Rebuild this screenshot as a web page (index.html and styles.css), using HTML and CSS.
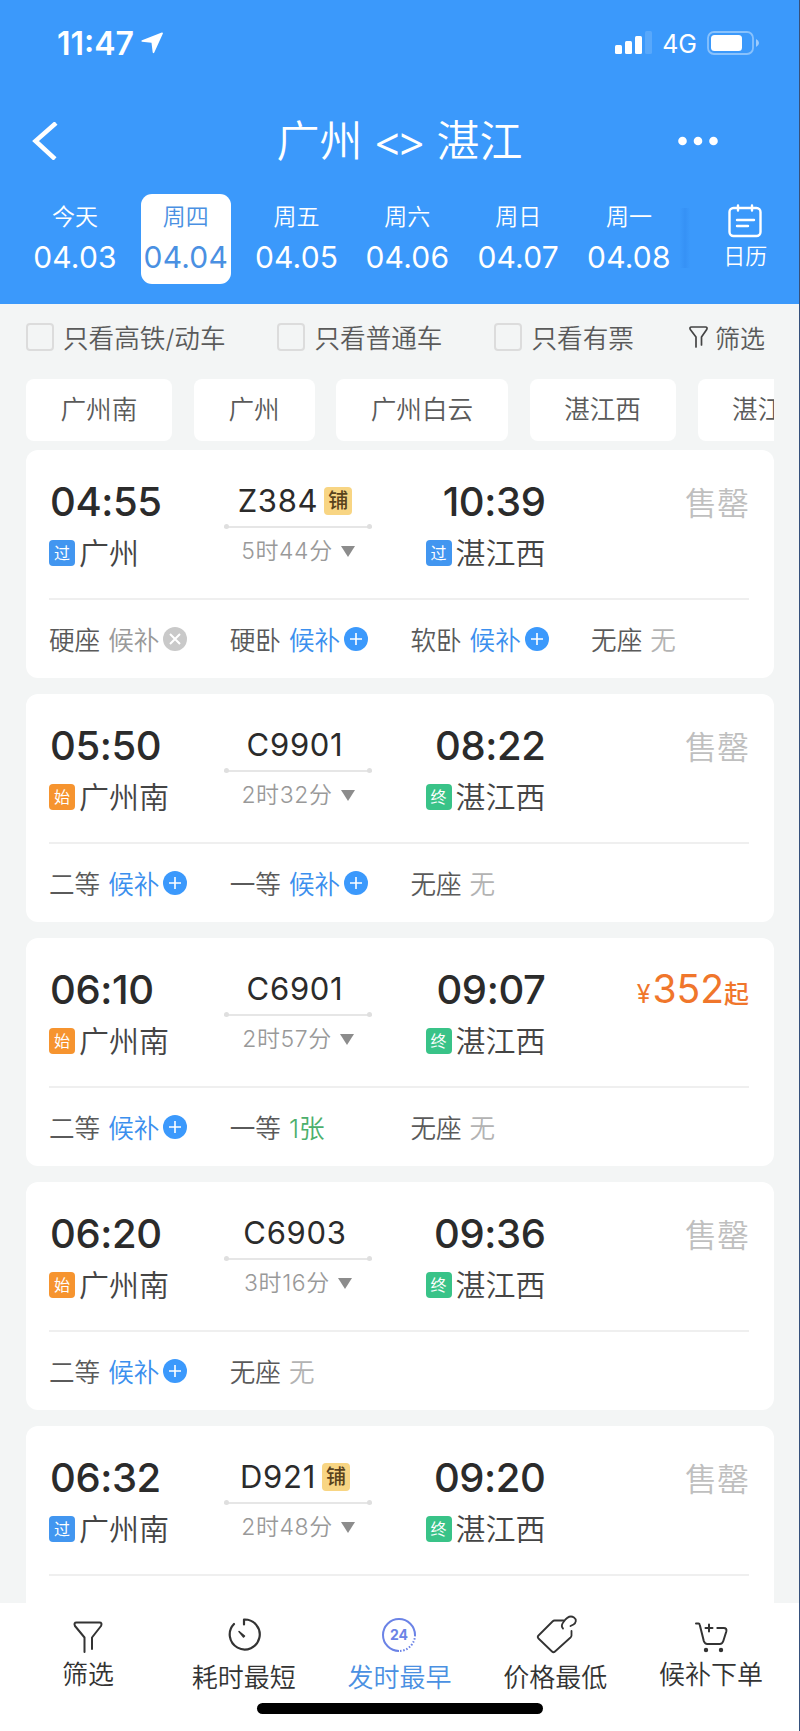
FILE: index.html
```
<!DOCTYPE html>
<html lang="zh-CN">
<head>
    <meta charset="UTF-8">
    <meta name="viewport" content="width=device-width, initial-scale=1.0">
    <title>广州 - 湛江 车票查询</title>
    <link rel="stylesheet" href="styles.css">
</head>
<body>
    <!-- Shared icons -->
    <svg class="icon-defs" width="0" height="0">
        <symbol id="plus" viewBox="0 0 24 24">
            <circle cx="12" cy="12" r="12" fill="#3b99fc"/>
            <path d="M12 6v12M6 12h12" stroke="#fff" stroke-width="1.6"/>
        </symbol>
        <symbol id="cross" viewBox="0 0 24 24">
            <circle cx="12" cy="12" r="12" fill="#c9c9c9"/>
            <path d="M7 7l10 10M17 7L7 17" stroke="#fff" stroke-width="2"/>
        </symbol>
        <symbol id="down" viewBox="0 0 14 11">
            <path d="M0 0h14L7 11z" fill="#8c8c8c"/>
        </symbol>
    </svg>

    <div class="app">
        <header class="header">
            <div class="status-bar">
                <span class="clock">11:47</span>
                <svg class="location" width="22" height="22" viewBox="0 0 22 22"><path d="M20.800.5L1 8.200q-1.500.8 0 1.500l9.500 1.100 1.200 9.700q.8 1.400 1.600 0L21.900 1.500q.2-1.200-1.100-1z" fill="#fff"/></svg>
                <svg class="signal" width="38" height="24" viewBox="0 0 38 24" fill="#fff">
                    <rect x="0" y="14" width="7" height="9" rx="1.500"/>
                    <rect x="10" y="10" width="7" height="13" rx="1.500"/>
                    <rect x="20" y="5" width="7" height="18" rx="1.500"/>
                    <rect x="30" y="0" width="7" height="23" rx="1.500" opacity=".15"/>
                </svg>
                <span class="network">4G</span>
                <svg class="battery" width="53" height="24" viewBox="0 0 53 24">
                    <rect x="1" y="1" width="45" height="22" rx="6" fill="none" stroke="#fff" stroke-opacity=".4" stroke-width="1.800"/>
                    <rect x="4" y="4" width="31" height="16" rx="3.500" fill="#fff"/>
                    <path d="M49 8q3 1.500 3 4t-3 4z" fill="#fff" fill-opacity=".5"/>
                </svg>
            </div>

            <div class="title-bar">
                <svg class="back" width="28" height="38" viewBox="0 0 28 38"><path d="M24 1L3.500 19 23 37" fill="none" stroke="#fff" stroke-width="4.500"/></svg>
                <h1>广州<span class="swap">&lt;&gt;</span>湛江</h1>
                <svg class="more" width="40" height="10" viewBox="0 0 40 10" fill="#fff"><circle cx="4.500" cy="5" r="4.300"/><circle cx="20" cy="5" r="4.300"/><circle cx="35.500" cy="5" r="4.300"/></svg>
            </div>

            <div class="dates">
                <div class="date"><span class="day">今天</span><span class="num">04.03</span></div>
                <div class="date active"><span class="day">周四</span><span class="num">04.04</span></div>
                <div class="date"><span class="day">周五</span><span class="num">04.05</span></div>
                <div class="date"><span class="day">周六</span><span class="num">04.06</span></div>
                <div class="date"><span class="day">周日</span><span class="num">04.07</span></div>
                <div class="date"><span class="day">周一</span><span class="num">04.08</span></div>
                <div class="divider"></div>
                <div class="calendar">
                    <svg width="34" height="34" viewBox="0 0 34 34" fill="none" stroke="#fff" stroke-width="2.400" stroke-linecap="round">
                        <rect x="1.500" y="4" width="31" height="28" rx="4"/>
                        <path d="M10 1.500v5M24 1.500v5M9 16h17M9 22h11"/>
                    </svg>
                    <span>日历</span>
                </div>
            </div>
        </header>

        <div class="filters">
            <label class="check"><span class="box"></span>只看高铁/动车</label>
            <label class="check"><span class="box"></span>只看普通车</label>
            <label class="check"><span class="box"></span>只看有票</label>
            <div class="filter-link">
                <svg width="19" height="22" viewBox="0 0 19 22" fill="none" stroke="#444" stroke-width="1.700" stroke-linecap="round" stroke-linejoin="round"><path d="M7 21V11L1.300 3.500Q.3 1 2.500 1h14q2.200 0 1.200 2.500L12.500 11v8"/></svg>
                筛选
            </div>
        </div>

        <div class="stations">
            <div class="chip">广州南</div>
            <div class="chip">广州</div>
            <div class="chip">广州白云</div>
            <div class="chip">湛江西</div>
            <div class="chip">湛江</div>
        </div>

        <main class="trains">
            <section class="card">
                <div class="trip">
                    <div class="stop">
                        <div class="time">04:55</div>
                        <div class="place"><i class="tag pass">过</i>广州</div>
                    </div>
                    <div class="middle">
                        <div class="train-no">Z384<i class="bed">铺</i></div>
                        <div class="line"></div>
                        <div class="duration">5时44分<svg width="14" height="11"><use href="#down"/></svg></div>
                    </div>
                    <div class="stop arrive">
                        <div class="time">10:39</div>
                        <div class="place"><i class="tag pass">过</i>湛江西</div>
                    </div>
                    <div class="price sold-out">售罄</div>
                </div>
                <div class="seats">
                    <div class="seat">硬座<span class="off">候补</span><svg width="24" height="24"><use href="#cross"/></svg></div>
                    <div class="seat">硬卧<span class="wait">候补</span><svg width="24" height="24"><use href="#plus"/></svg></div>
                    <div class="seat">软卧<span class="wait">候补</span><svg width="24" height="24"><use href="#plus"/></svg></div>
                    <div class="seat">无座<span class="none">无</span></div>
                </div>
            </section>

            <section class="card">
                <div class="trip">
                    <div class="stop">
                        <div class="time">05:50</div>
                        <div class="place"><i class="tag start">始</i>广州南</div>
                    </div>
                    <div class="middle">
                        <div class="train-no">C9901</div>
                        <div class="line"></div>
                        <div class="duration">2时32分<svg width="14" height="11"><use href="#down"/></svg></div>
                    </div>
                    <div class="stop arrive">
                        <div class="time">08:22</div>
                        <div class="place"><i class="tag end">终</i>湛江西</div>
                    </div>
                    <div class="price sold-out">售罄</div>
                </div>
                <div class="seats">
                    <div class="seat">二等<span class="wait">候补</span><svg width="24" height="24"><use href="#plus"/></svg></div>
                    <div class="seat">一等<span class="wait">候补</span><svg width="24" height="24"><use href="#plus"/></svg></div>
                    <div class="seat">无座<span class="none">无</span></div>
                </div>
            </section>

            <section class="card">
                <div class="trip">
                    <div class="stop">
                        <div class="time">06:10</div>
                        <div class="place"><i class="tag start">始</i>广州南</div>
                    </div>
                    <div class="middle">
                        <div class="train-no">C6901</div>
                        <div class="line"></div>
                        <div class="duration">2时57分<svg width="14" height="11"><use href="#down"/></svg></div>
                    </div>
                    <div class="stop arrive">
                        <div class="time">09:07</div>
                        <div class="place"><i class="tag end">终</i>湛江西</div>
                    </div>
                    <div class="price"><span class="yen">¥</span>352<span class="from">起</span></div>
                </div>
                <div class="seats">
                    <div class="seat">二等<span class="wait">候补</span><svg width="24" height="24"><use href="#plus"/></svg></div>
                    <div class="seat">一等<span class="left">1张</span></div>
                    <div class="seat">无座<span class="none">无</span></div>
                </div>
            </section>

            <section class="card">
                <div class="trip">
                    <div class="stop">
                        <div class="time">06:20</div>
                        <div class="place"><i class="tag start">始</i>广州南</div>
                    </div>
                    <div class="middle">
                        <div class="train-no">C6903</div>
                        <div class="line"></div>
                        <div class="duration">3时16分<svg width="14" height="11"><use href="#down"/></svg></div>
                    </div>
                    <div class="stop arrive">
                        <div class="time">09:36</div>
                        <div class="place"><i class="tag end">终</i>湛江西</div>
                    </div>
                    <div class="price sold-out">售罄</div>
                </div>
                <div class="seats">
                    <div class="seat">二等<span class="wait">候补</span><svg width="24" height="24"><use href="#plus"/></svg></div>
                    <div class="seat">无座<span class="none">无</span></div>
                </div>
            </section>

            <section class="card">
                <div class="trip">
                    <div class="stop">
                        <div class="time">06:32</div>
                        <div class="place"><i class="tag pass">过</i>广州南</div>
                    </div>
                    <div class="middle">
                        <div class="train-no">D921<i class="bed">铺</i></div>
                        <div class="line"></div>
                        <div class="duration">2时48分<svg width="14" height="11"><use href="#down"/></svg></div>
                    </div>
                    <div class="stop arrive">
                        <div class="time">09:20</div>
                        <div class="place"><i class="tag end">终</i>湛江西</div>
                    </div>
                    <div class="price sold-out">售罄</div>
                </div>
                <div class="seats"></div>
            </section>
        </main>

        <footer class="bottom">
            <nav class="tabs">
                <div class="tab raised">
                    <svg width="40" height="40" viewBox="0 0 40 40" fill="none" stroke="#333" stroke-width="2" stroke-linecap="round" stroke-linejoin="round"><path d="M16.500 36V21.500L7 10Q5.500 6.500 8.500 6.500h23q3 0 1.500 3.500l-9 11.500V33"/></svg>
                    筛选
                </div>
                <div class="tab">
                    <svg width="40" height="40" viewBox="0 0 40 40" fill="none" stroke="#333" stroke-width="2.200" stroke-linecap="round" stroke-linejoin="round"><path d="M20 8.500V3.500A15 15 0 1 1 10 8"/><path d="M15 15.500l5.500 4.500-1 1z" fill="#333" stroke-width="1.500"/></svg>
                    耗时最短
                </div>
                <div class="tab active">
                    <svg width="40" height="40" viewBox="0 0 40 40" fill="none" stroke="#6b83e6" stroke-width="2"><path d="M20 35A16 16 0 1 1 36 19"/><path d="M36 19A16 16 0 0 1 20 35" stroke-dasharray="1.500 1.700"/><text class="hours" x="20" y="24">24</text></svg>
                    发时最早
                </div>
                <div class="tab">
                    <svg width="40" height="40" viewBox="0 0 40 40" fill="none" stroke="#333" stroke-width="1.800" stroke-linecap="round" stroke-linejoin="round"><path d="M28.500 4.500h-9q-1 0-2 1L3.500 19.500q-1.500 1.500 0 3L17 35.500q1.500 1.500 3 0L35.500 21.500q1-1 1-2V15"/><path d="M28 12.500q-2.500-2.500.5-6.500c3.500-5 7.500-6.500 10.500-4.500s2 5.500-.5 7l-3 1.500"/></svg>
                    价格最低
                </div>
                <div class="tab raised">
                    <svg width="40" height="40" viewBox="0 0 40 40" fill="none" stroke="#333" stroke-width="2" stroke-linecap="round" stroke-linejoin="round"><path d="M5 7.500h2.500q1 0 1.300 1.500l4 16q1 3 3.500 3h12.500q2.500 0 3.500-3l3-9.500q.8-3.500-2.500-3.500h-6.500M18 8.500v7M14.500 12h7"/><circle cx="15" cy="34" r="1.200" fill="#333"/><circle cx="30" cy="34" r="1.200" fill="#333"/></svg>
                    候补下单
                </div>
            </nav>
            <div class="home-indicator"></div>
        </footer>
    </div>
</body>
</html>
```

FILE: styles.css
```
* {
    box-sizing: border-box;
}

body {
    margin: 0;
    font-family: Inter, "Noto Sans CJK SC", sans-serif;
    font-weight: 350;
    color: #5a5a5a;
    background-color: #f3f5f5;
}

svg {
    display: block;
    flex: none;
}

i {
    font-style: normal;
}

.icon-defs {
    position: absolute;
}

.app {
    display: flex;
    flex-direction: column;
    width: 800px;
    height: 1731px;
    overflow: hidden;
    border-right: 1px solid #35507c;
}

/* Header */
.header {
    flex: none;
    height: 304px;
    background-color: #3b99fb;
    color: #fff;
}

.status-bar {
    display: flex;
    align-items: center;
    height: 86px;
    padding: 0 39px 0 57px;
}

.clock {
    font-size: 32px;
    font-weight: 600;
}

.location {
    margin-left: 7px;
}

.signal {
    margin-left: auto;
}

.network {
    margin: 2px 10px 0 9px;
    font-size: 25px;
    font-weight: 400;
}

.title-bar {
    display: flex;
    align-items: center;
    justify-content: space-between;
    height: 110px;
    margin-bottom: -2px;
    padding: 0 81px 0 32px;
}

.title-bar h1 {
    display: flex;
    align-items: center;
    margin: 0 0 0 61px;
    font-size: 43px;
    font-weight: 350;
    line-height: 60px;
}

.swap {
    width: 74px;
    padding-top: 6px;
    font-family: "Noto Sans", sans-serif;
    font-size: 43px;
    font-weight: 400;
    text-align: center;
}

.dates {
    display: flex;
    padding-left: 19px;
}

.date {
    display: flex;
    flex-direction: column;
    align-items: center;
    width: 90px;
    height: 90px;
    margin: 0 10.4px;
    border-radius: 11px;
}

.date:first-child {
    margin-left: 11px;
}

.date.active {
    background-color: #fff;
    color: #4a90e2;
}

.day {
    margin-top: 8px;
    font-size: 23px;
    line-height: 30px;
}

.num {
    margin-top: 7px;
    font-size: 30px;
    font-weight: 400;
    line-height: 36px;
    letter-spacing: 0.2px;
}

.divider {
    width: 10px;
    height: 60px;
    margin: 14px 0 0 -4px;
    background: linear-gradient(to right, transparent, rgba(30, 110, 220, 0.18), transparent);
}

.calendar {
    display: flex;
    flex-direction: column;
    align-items: center;
    margin: 10px 0 0 33px;
    font-size: 22px;
    line-height: 32px;
}

.calendar span {
    margin-top: 2px;
}

/* Filters */
.filters {
    flex: none;
    display: flex;
    align-items: center;
    height: 75px;
    padding: 0 34px 10px 26px;
    font-size: 25.6px;
}

.check {
    display: flex;
    align-items: center;
    margin-right: 52px;
}

.box {
    width: 28px;
    height: 28px;
    margin-right: 9px;
    border: 2px solid #dcdcdc;
    border-radius: 4px;
}

.filter-link {
    display: flex;
    align-items: center;
    gap: 7px;
    margin-left: auto;
    font-size: 25px;
}

.stations {
    flex: none;
    display: flex;
    gap: 21.6px;
    margin: 0 25px 9px 26px;
    overflow: hidden;
}

.chip {
    flex: none;
    height: 62px;
    padding: 0 35px 0 34.5px;
    border-radius: 8px;
    background-color: #fff;
    font-size: 25.6px;
    line-height: 62px;
}

/* Train cards */
.trains {
    flex: 1;
    min-height: 0;
    overflow: hidden;
    padding: 0 25px 0 26px;
}

.card {
    height: 228px;
    margin-bottom: 16px;
    padding: 0 25px 0 23px;
    border-radius: 12px;
    background-color: #fff;
}

.trip {
    display: grid;
    grid-template-columns: 172px 154px 170.5px 1fr;
    height: 150px;
    padding-top: 30px;
    border-bottom: 2px solid #efefef;
}

.time {
    padding-left: 1px;
    font-size: 40px;
    font-weight: 500;
    line-height: 44px;
    letter-spacing: -0.4px;
    color: #2b2b2b;
}

.place {
    display: flex;
    align-items: center;
    margin-top: 12px;
    font-size: 30px;
    line-height: 34px;
    color: #444;
}

.arrive {
    text-align: right;
}

.arrive .place {
    justify-content: flex-end;
}

.tag {
    width: 26px;
    height: 26px;
    margin-right: 4px;
    border-radius: 4px;
    color: #fff;
    font-size: 16px;
    font-weight: 400;
    line-height: 26px;
    text-align: center;
}

.pass {
    background-color: #4296f0;
}

.start {
    background-color: #f6942f;
}

.end {
    background-color: #39c388;
}

.middle {
    display: flex;
    flex-direction: column;
    align-items: center;
    padding-top: 4px;
}

.train-no {
    display: flex;
    align-items: center;
    padding-right: 6px;
    font-size: 31px;
    font-weight: 400;
    line-height: 33px;
    letter-spacing: 0.7px;
    color: #2b2b2b;
}

.bed {
    width: 28px;
    height: 28px;
    margin-left: 6px;
    border-radius: 4px;
    background-color: #f8d583;
    color: #5a421c;
    font-size: 20px;
    font-weight: 500;
    line-height: 28px;
    letter-spacing: 0;
    text-align: center;
}

/* Thin route line with a dot at each end */
.line {
    display: flex;
    align-items: center;
    justify-content: space-between;
    width: 148px;
    height: 5px;
    margin: 7px 0 6px;
    background: linear-gradient(#e6e6e6, #e6e6e6) center / 100% 2px no-repeat;
}

.line::before,
.line::after {
    content: "";
    width: 5px;
    height: 5px;
    border-radius: 50%;
    background-color: #dfdfdf;
}

.duration {
    display: flex;
    align-items: center;
    gap: 8px;
    font-size: 23px;
    line-height: 32px;
    letter-spacing: 0.6px;
    color: #999;
}

.price {
    display: flex;
    align-items: baseline;
    justify-content: flex-end;
    font-size: 39px;
    font-weight: 400;
    line-height: 42px;
    color: #f0762b;
}

.yen {
    margin-right: 2px;
    font-size: 25px;
}

.from {
    font-size: 25px;
    font-weight: 500;
}

.sold-out {
    font-size: 32px;
    font-weight: 350;
    line-height: 48px;
    color: #bfbfbf;
}

.seats {
    display: grid;
    grid-template-columns: repeat(4, 180.7px);
    height: 77px;
}

.seat {
    display: flex;
    align-items: center;
    font-size: 25.6px;
    white-space: nowrap;
}

.seat span {
    margin: 0 4px 0 8px;
}

.off {
    color: #999;
}

.wait {
    color: #3b8fee;
}

.left {
    color: #4caf6c;
}

.none {
    color: #b3b3b3;
}

/* Bottom bar */
.bottom {
    flex: none;
    height: 128px;
    background-color: #fff;
}

.tabs {
    display: flex;
    height: 100px;
    padding: 13px 10px 0 10px;
}

.tab {
    flex: 1;
    display: flex;
    flex-direction: column;
    align-items: center;
    font-size: 26px;
    line-height: 36px;
    color: #333;
}

.tab svg {
    margin-bottom: 4px;
    overflow: visible;
}

.tab.raised svg {
    margin-bottom: 1px;
}

.tab.active {
    color: #4a90e2;
}

.hours {
    fill: #6b83e6;
    stroke: none;
    font-size: 14px;
    font-weight: 700;
    text-anchor: middle;
}

.home-indicator {
    width: 286px;
    height: 11px;
    margin: 0 auto;
    border-radius: 6px;
    background-color: #000;
}
```
